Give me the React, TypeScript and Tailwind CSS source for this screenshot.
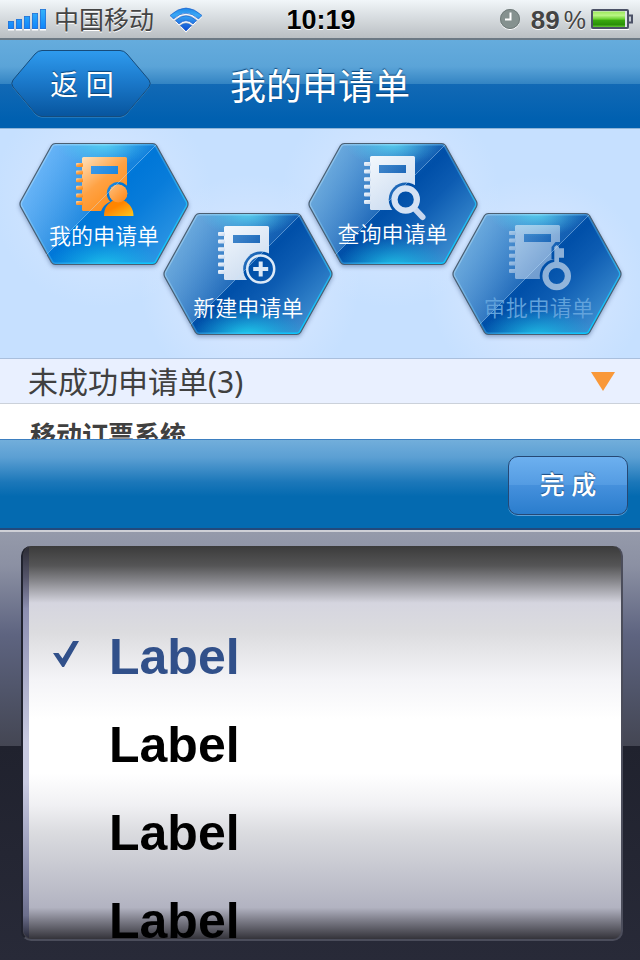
import { useState, type ReactNode } from "react";

const CJK = "font-['Noto_Sans','Noto_Sans_CJK_SC',sans-serif]";
const LATIN = "font-['Liberation_Sans','Noto_Sans_CJK_SC',sans-serif]";

function Signal() {
  const tops = [21, 19, 16, 13, 9];
  return (
    <svg width="38" height="40" viewBox="8 0 38 40" aria-hidden="true">
      <defs>
        <linearGradient id="sig" x1="0" y1="9" x2="0" y2="29" gradientUnits="userSpaceOnUse">
          <stop offset="0" stopColor="#35b4fa" />
          <stop offset="1" stopColor="#0f84fa" />
        </linearGradient>
      </defs>
      {tops.map((t, i) => (
        <g key={t}>
          <rect x={8 + i * 8} y="29" width="6" height="1.5" fill="#fff" />
          <rect x={8 + i * 8} y={t} width="6" height={29 - t} fill="#2a6fd0" />
          <rect x={8.7 + i * 8} y={t + 0.7} width="4.6" height={27.6 - t} fill="url(#sig)" />
        </g>
      ))}
    </svg>
  );
}

function Wifi() {
  const arcs = (
    <>
      <path d="M170 15.5Q186 0.500 202 15.500L198.500 19Q186 7.500 173.500 19Z" />
      <path d="M175.500 20.500Q186 11 196.500 20.500L193 24Q186 17.500 179 24Z" />
      <path d="M180.500 25.500Q186 21.500 191.500 25.500L186 31Z" />
    </>
  );
  return (
    <svg width="32" height="40" viewBox="170 0 32 40" aria-hidden="true">
      <defs>
        <linearGradient id="wifi" x1="0" y1="8" x2="0" y2="31" gradientUnits="userSpaceOnUse">
          <stop offset="0" stopColor="#1f86e8" />
          <stop offset=".3" stopColor="#3aa8f5" />
          <stop offset="1" stopColor="#0a48d0" />
        </linearGradient>
      </defs>
      <g fill="#fff" transform="translate(0 1.500)">{arcs}</g>
      <g fill="url(#wifi)" stroke="#1556c4" strokeWidth=".6">{arcs}</g>
    </svg>
  );
}

function Clock() {
  return (
    <svg width="22" height="40" viewBox="499 0 22 40" aria-hidden="true">
      <circle cx="510" cy="20" r="10" fill="#fff" />
      <circle cx="510" cy="19" r="10" fill="#85918f" />
      <circle cx="510" cy="19" r="9.500" fill="none" stroke="#717c7b" />
      <path d="M510.500 12.500V19.500H505" fill="none" stroke="#fff" strokeWidth="2" />
    </svg>
  );
}

function Battery() {
  return (
    <svg width="44" height="40" viewBox="591 0 44 40" aria-hidden="true">
      <defs>
        <linearGradient id="bat" x1="0" y1="0" x2="0" y2="1">
          <stop offset="0" stopColor="#9be85a" />
          <stop offset=".25" stopColor="#baf586" />
          <stop offset=".5" stopColor="#66cf2b" />
          <stop offset=".55" stopColor="#3aa90e" />
          <stop offset=".85" stopColor="#2a8f08" />
          <stop offset="1" stopColor="#65c935" />
        </linearGradient>
      </defs>
      <path d="M592 29.500H630" stroke="#fff" />
      <rect x="593" y="10" width="36" height="18" rx="1" fill="#dfe3e8" stroke="#4b5166" strokeWidth="2" />
      <rect x="594" y="11.500" width="32" height="15.500" fill="url(#bat)" />
      <path d="M630 15.500H633V22.500H630" fill="#c5cad3" stroke="#4b5166" strokeWidth="2" />
    </svg>
  );
}

const HEX =
  "M36.500 .5H133.500Q136 .5 137.500 2.500L168.500 58.500Q169.500 61 168.500 63.500L137.500 119.500Q136 121.500 133.500 121.500H36.500Q34 121.500 32.500 119.500L1.500 63.500Q.5 61 1.500 58.500L32.500 2.500Q34 .5 36.500 .5Z";

type Kind = "mine" | "create" | "search" | "approve";

function Glyph({ kind }: { kind: Kind }) {
  const dx = { mine: 2, create: 0, search: 1, approve: 2 }[kind];
  const dy = { mine: 1, create: 0, search: 0, approve: -1 }[kind];
  const fill = kind === "mine" ? `url(#orange)` : "url(#paper)";
  const cut: Record<Kind, ReactNode> = {
    mine: (
      <>
        <circle cx="99.300" cy="50.500" r="11.500" />
        <path d="M81 75C81 64 88 59 94 58H105C112 59 118 66 118 75Z" />
      </>
    ),
    create: <circle cx="97.700" cy="56" r="17.500" />,
    search: (
      <>
        <circle cx="97.700" cy="56.500" r="17" />
        <path d="M97 56L120 80" stroke="#000" strokeWidth="11" />
      </>
    ),
    approve: (
      <>
        <circle cx="104.700" cy="63" r="17" />
        <path d="M99.500 46V34L103.500 29H120V47H110Z" />
      </>
    ),
  };
  const badge: Record<Kind, ReactNode> = {
    mine: (
      <>
        <circle cx="99.300" cy="50.500" r="9" fill="url(#head)" />
        <path d="M85 73C85 64 89 61 94 57.500H105C111 61 114.500 66 114.500 73Z" fill="url(#body)" />
        <circle cx="99.300" cy="50.500" r="9" fill="url(#head)" />
      </>
    ),
    create: (
      <>
        <circle cx="97.700" cy="56" r="13.500" fill="none" stroke="#dce9f7" strokeWidth="2.500" />
        <path d="M97.700 48.500V63.500M90.200 56H105.200" stroke="#dce9f7" strokeWidth="4" />
      </>
    ),
    search: (
      <>
        <path d="M106 65L114.500 74" stroke="#c8d7ee" strokeWidth="6" strokeLinecap="round" />
        <circle cx="97.700" cy="56.500" r="11.200" fill="none" stroke="#d5e2f4" strokeWidth="6.200" />
      </>
    ),
    approve: (
      <>
        <path d="M102.300 51V34L104.700 32L107 34V35.300H112V44.700H107V51Z" fill="#fff" />
        <circle cx="104.700" cy="63" r="11.200" fill="none" stroke="#fff" strokeWidth="6.200" />
      </>
    ),
  };
  return (
    <g opacity={kind === "approve" ? 0.55 : 1}>
      <mask id={`cut-${kind}`} maskUnits="userSpaceOnUse" x="0" y="0" width="170" height="122">
        <rect width="170" height="122" fill="#fff" />
        <g fill="#000">
          {cut[kind]}
          <rect x={70 + dx} y={22 + dy} width="27" height="8" />
        </g>
      </mask>
      <g mask={`url(#cut-${kind})`}>
        <g transform={`translate(${dx} ${dy})`} fill={fill}>
          <rect x="61" y="13" width="45" height="54" rx="1.500" />
          {[21, 28.600, 36.200, 43.800, 51.400, 59].map((y) => (
            <rect key={y} x="55" y={y - 2} width="7" height="4" rx="1" />
          ))}
        </g>
      </g>
      {badge[kind]}
    </g>
  );
}

function Hexagon({ kind }: { kind: Kind }) {
  const active = kind === "mine";
  return (
    <svg
      className="absolute inset-0 overflow-visible drop-shadow-[0_2px_2px_rgba(40,70,120,0.4)]"
      width="170"
      height="122"
      viewBox="0 0 170 122"
      aria-hidden="true"
    >
      <defs>
        <linearGradient id={`base-${kind}`} x1="40" y1="0" x2="150" y2="110" gradientUnits="userSpaceOnUse">
          <stop offset="0" stopColor={active ? "#2390ea" : "#2a7ac6"} />
          <stop offset=".48" stopColor={active ? "#0077d8" : "#004fa8"} />
          <stop offset=".65" stopColor={active ? "#087cda" : "#0d5cb2"} />
          <stop offset="1" stopColor={active ? "#2e96e4" : "#3f90d2"} />
        </linearGradient>
        <linearGradient id={`gloss-${kind}`} x1="10" y1="40" x2="85" y2="75" gradientUnits="userSpaceOnUse">
          <stop offset="0" stopColor={active ? "#8fc9ff" : "#8fc4ea"} stopOpacity=".65" />
          <stop offset="1" stopColor="#8fc4f5" stopOpacity=".12" />
        </linearGradient>
        <radialGradient id={`low-${kind}`} cx="0" cy="0" r="1" gradientUnits="userSpaceOnUse" gradientTransform="translate(85 124) scale(58 30)">
          <stop offset="0" stopColor="#20d4ee" stopOpacity={kind === "create" ? 1 : 0.8} />
          <stop offset="1" stopColor="#10b8e8" stopOpacity="0" />
        </radialGradient>
        <radialGradient id={`top-${kind}`} cx="0" cy="0" r="1" gradientUnits="userSpaceOnUse" gradientTransform="translate(85 0) scale(48 24)">
          <stop offset="0" stopColor="#5cdcf4" stopOpacity=".85" />
          <stop offset="1" stopColor="#4ccaf0" stopOpacity="0" />
        </radialGradient>
        <linearGradient id={`rim-${kind}`} x1="50" y1="20" x2="135" y2="122" gradientUnits="userSpaceOnUse">
          <stop offset="0" stopColor="#bfe6ff" stopOpacity=".4" />
          <stop offset=".5" stopColor="#50c0f5" stopOpacity=".4" />
          <stop offset="1" stopColor="#08c8ff" />
        </linearGradient>
        <linearGradient id="orange" x1="0" y1="0" x2=".7" y2="1">
          <stop offset="0" stopColor="#ffe2bd" />
          <stop offset=".5" stopColor="#ffa244" />
          <stop offset="1" stopColor="#ff8b14" />
        </linearGradient>
        <linearGradient id="head" x1="0" y1="0" x2="1" y2="1">
          <stop offset="0" stopColor="#ffbf7c" />
          <stop offset="1" stopColor="#ff8510" />
        </linearGradient>
        <linearGradient id="body" x1="0" y1="0" x2="1" y2="1">
          <stop offset=".4" stopColor="#ff8500" />
          <stop offset="1" stopColor="#ffc71c" />
        </linearGradient>
        <linearGradient id="paper" x1="0" y1="0" x2=".6" y2="1">
          <stop offset="0" stopColor="#f3f8fd" />
          <stop offset="1" stopColor="#ccdcf0" />
        </linearGradient>
        <clipPath id={`clip-${kind}`}>
          <path d={HEX} />
        </clipPath>
      </defs>
      <path d={HEX} fill={`url(#base-${kind})`} />
      <g clipPath={`url(#clip-${kind})`}>
        <path d="M0 0H139L27 112L0 122Z" fill={`url(#gloss-${kind})`} />
        <rect width="170" height="122" fill={`url(#top-${kind})`} />
        <rect width="170" height="122" fill={`url(#low-${kind})`} />
        <path d={HEX} fill="none" stroke={`url(#rim-${kind})`} strokeWidth="4" />
      </g>
      <path d={HEX} fill="none" stroke="#4b5f72" strokeWidth="1.200" />
      <Glyph kind={kind} />
      <path d="M137 2L27 112" stroke="#c5e6ff" strokeOpacity=".5" strokeWidth=".8" />
    </svg>
  );
}

const tiles: { kind: Kind; label: string; low: boolean; pad: string }[] = [
  { kind: "mine", label: "我的申请单", low: false, pad: "pb-3.5" },
  { kind: "create", label: "新建申请单", low: true, pad: "pb-3" },
  { kind: "search", label: "查询申请单", low: false, pad: "pb-4" },
  { kind: "approve", label: "审批申请单", low: true, pad: "pb-3 pl-1" },
];

export default function App() {
  const [picked, setPicked] = useState(0);
  return (
    <div className={`flex h-screen flex-col overflow-hidden bg-white ${CJK}`}>
      <div className={`grid h-10 shrink-0 grid-cols-[1fr_auto_1fr] items-center border-b-2 border-[#6c7984] bg-linear-to-b from-[#f1f6f9] to-[#babfc3] pr-1.5 pl-2 ${LATIN}`}>
        <div className="flex items-center gap-2">
          <Signal />
          <span className="text-[25px] leading-10 text-[#444] [text-shadow:0_1px_0_#fff]">中国移动</span>
          <span className="pl-2">
            <Wifi />
          </span>
        </div>
        <time className="text-[27px] leading-10 font-bold text-black [text-shadow:0_1px_0_#fff]">10:19</time>
        <div className="flex items-center justify-end">
          <Clock />
          <span className="pl-2.5 text-[26px] leading-10 font-bold text-[#444] [text-shadow:0_1px_0_#fff]">89</span>
          <span className="pr-1 pl-1 text-[25px] leading-10 text-[#444] [text-shadow:0_1px_0_#fff]">%</span>
          <Battery />
        </div>
      </div>

      <header className="grid h-[89px] shrink-0 grid-cols-[1fr_auto_1fr] items-center border-b border-[#8eb4d8] bg-[linear-gradient(#65acdd,#5ba4d8_30%,#3384c3_50%,#1269b5_50%,#0060b0_90%)] px-[11px]">
        <button type="button" className="relative h-[68px] w-[140px] pl-0.5 text-[28px] text-white [text-shadow:0_-1px_1px_#0c4478]">
          <svg className="absolute inset-0" width="140" height="68" viewBox="0 0 140 68" aria-hidden="true">
            <defs>
              <linearGradient id="back" x1="0" y1="0" x2="0" y2="1">
                <stop offset="0" stopColor="#2f9bee" />
                <stop offset=".5" stopColor="#1a77c8" />
                <stop offset="1" stopColor="#07559e" />
              </linearGradient>
            </defs>
            <path d="M31 1.500H109Q113 1.500 116 5L138 31Q140.500 34.500 138 38L116 64Q113 67.500 109 67.500H31Q27 67.500 24 64L2 38Q-.5 34.500 2 31L24 5Q27 1.500 31 1.500Z" fill="#6cb0e0" opacity=".6" />
            <path d="M31 .5H109Q113 .5 116 4L138 30Q140.500 33.500 138 37L116 63Q113 66.500 109 66.500H31Q27 66.500 24 63L2 37Q-.5 33.500 2 30L24 4Q27 .5 31 .5Z" fill="url(#back)" stroke="#164c7c" />
          </svg>
          <span className="relative">返 回</span>
        </button>
        <h1 className="pt-1.5 text-[36px] leading-[52px] text-white [text-shadow:0_-1px_1px_#0c4478]">我的申请单</h1>
      </header>

      <nav className="h-[230px] shrink-0 border-b border-[#a9bfdd] bg-[radial-gradient(circle_at_16%_30%,#d9e8ff,transparent_110px),radial-gradient(circle_at_39%_68%,#dfeaff,transparent_110px),radial-gradient(circle_at_61%_30%,#d9e8ff,transparent_110px),radial-gradient(circle_at_84%_68%,#dfeaff,transparent_110px)] bg-[#c6e0ff] pt-3.5 pr-11 pl-[19px]">
        <ul className="grid grid-cols-4">
          {tiles.map((t) => (
            <li key={t.kind} className={t.low ? "pt-[70px]" : ""}>
              <button type="button" className={`relative flex h-[122px] w-[170px] items-end justify-center ${t.pad}`}>
                <Hexagon kind={t.kind} />
                <span
                  className={`relative text-[22px] leading-8 whitespace-nowrap ${
                    t.kind === "approve" ? "font-[350] text-[#62a3dc]" : "font-[350] text-white"
                  }`}
                >
                  {t.label}
                </span>
              </button>
            </li>
          ))}
        </ul>
      </nav>

      <button type="button" className="flex h-[45px] shrink-0 items-center justify-between border-b border-[#cbd1da] bg-[#e9f0ff] pr-[25px] pl-7 text-[30px] leading-[44px] text-[#404040]">
        <span className="pt-0.5">未成功申请单(3)</span>
        <svg width="24" height="19" viewBox="0 0 24 19" aria-hidden="true">
          <path d="M0 0H24L12 19Z" fill="#f99839" />
        </svg>
      </button>

      <section className="min-h-0 flex-1 overflow-hidden pt-[11px] pl-[30px]">
        <h2 className="text-[26px] leading-10 font-bold text-[#404040]">移动订票系统</h2>
      </section>

      <div className="flex h-[91px] shrink-0 items-start justify-end border-t border-b-2 border-t-[#3d7fc0] border-b-[#22497c] bg-[linear-gradient(#72aedb,#5b9fd3_20%,#1b77b9_48%,#046ab0_64%)] pt-4 pr-3">
        <button type="button" className="h-[59px] w-[120px] rounded-[10px] border border-[#264874] bg-[linear-gradient(#6db0ef,#539be2_50%,#4590dc_50%,#2a7dcd)] pb-0.5 text-[25px] font-medium text-white shadow-[0_1px_0_#5ba0d8] [text-shadow:0_-1px_1px_#1c4c80]">
          完 成
        </button>
      </div>

      <div className="h-[430px] shrink-0 border-t-2 border-[#cfd0d6] bg-[linear-gradient(#959aaa,#8b90a3_8%,#5e6480_24%,#50556a_37%,#444653_50%,#20222e_50%,#282a38)] pt-3.5 pr-[17px] pb-[19px] pl-[21px]">
        <fieldset className={`h-full overflow-hidden rounded-[10px] border-2 border-t-0 border-[#4b4d5b] border-l-[#20222e] bg-[linear-gradient(#3b3b3b,#555556_5%,#88888d_9%,#d5d5df_14.500%,#dcdcdf_22%,#f4f4f7_34%,#fff_44%,#fff_58%,#f0f0f3_66%,#dadbdf_73%,#b2b3c1_92%,#81818d_95%,#34333a)] ${LATIN}`}>
          <div className="flex h-full">
            <div className="w-1.5 shrink-0 bg-[linear-gradient(#2b2b34,#55556a_8%,#8d8fb0_16%,#9a9cbc_24%,#c9cbe1_50%,#c9cbe1_60%,#8083a3_88%,#6c6f8c_94%,#252635)]" />
            <div className="flex-1 pt-[67px]">
              {[0, 1, 2, 3].map((n) => (
                <label key={n} className="flex h-[88px] items-center pl-6">
                  <input
                    type="radio"
                    name="choice"
                    checked={picked === n}
                    onChange={() => setPicked(n)}
                    className="peer w-0 appearance-none"
                  />
                  <svg className="invisible peer-checked:visible" width="26" height="34" viewBox="0 0 26 34" aria-hidden="true">
                    <path d="M0 13H5.500L9.500 18.500L20 1H26L11 27H9.300Z" fill="#31508a" />
                  </svg>
                  <span className="pl-[30px] text-[50px] leading-[88px] font-bold text-black peer-checked:text-[#31508a]">Label</span>
                </label>
              ))}
            </div>
          </div>
        </fieldset>
      </div>
    </div>
  );
}
